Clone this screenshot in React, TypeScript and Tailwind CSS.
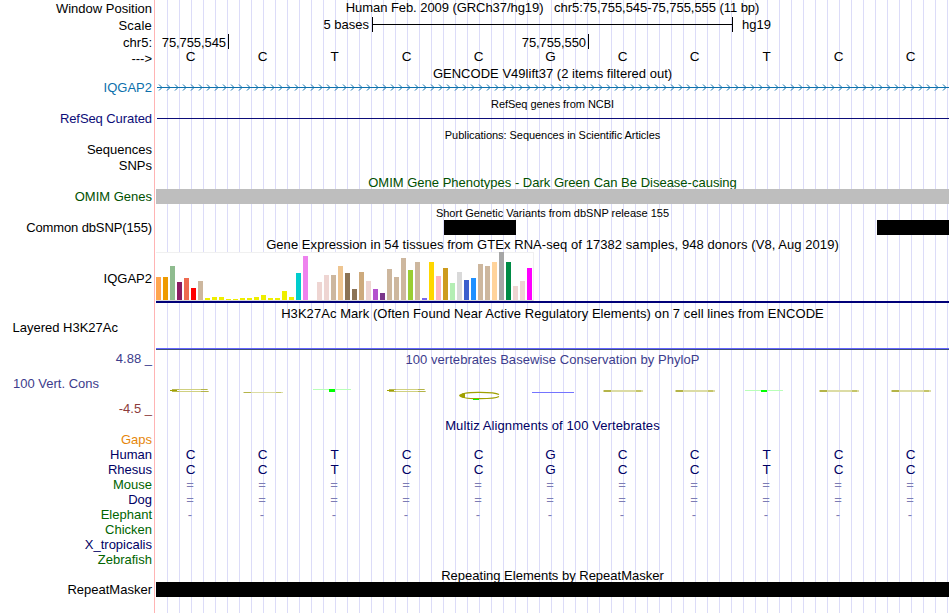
import type { ReactNode } from "react";
import clsx from "clsx";

interface TrackRowProps {
  height: string;
  label?: string;
  labelClass?: string;
  children?: ReactNode;
}

interface GtexBar {
  height: number;
  color: string;
}

const SEQUENCE = ["C", "C", "T", "C", "C", "G", "C", "C", "T", "C", "C"];

const SPECIES = [
  { name: "Gaps", color: "text-[#e6860a]", symbol: "" },
  { name: "Human", color: "text-[#000064]", symbol: "base" },
  { name: "Rhesus", color: "text-[#000064]", symbol: "base" },
  { name: "Mouse", color: "text-[#006400]", symbol: "=" },
  { name: "Dog", color: "text-[#000064]", symbol: "=" },
  { name: "Elephant", color: "text-[#006400]", symbol: "-" },
  { name: "Chicken", color: "text-[#006400]", symbol: "" },
  { name: "X_tropicalis", color: "text-[#000064]", symbol: "" },
  { name: "Zebrafish", color: "text-[#006400]", symbol: "" },
];

// median expression per tissue, in pixels
const GTEX: GtexBar[] = [
  { height: 23, color: "#ffa54f" },
  { height: 23, color: "#ee9a00" },
  { height: 34, color: "#8fbc8f" },
  { height: 18, color: "#8b1c62" },
  { height: 22, color: "#ee6a50" },
  { height: 12, color: "#ff0000" },
  { height: 19, color: "#cdb79e" },
  { height: 2, color: "#eeee00" },
  { height: 3, color: "#eeee00" },
  { height: 3, color: "#eeee00" },
  { height: 1, color: "#eeee00" },
  { height: 1, color: "#eeee00" },
  { height: 2, color: "#eeee00" },
  { height: 2, color: "#eeee00" },
  { height: 3, color: "#eeee00" },
  { height: 5, color: "#eeee00" },
  { height: 2, color: "#eeee00" },
  { height: 2, color: "#eeee00" },
  { height: 9, color: "#eeee00" },
  { height: 3, color: "#eeee00" },
  { height: 27, color: "#00cdcd" },
  { height: 44, color: "#ee82ee" },
  { height: 0, color: "#9ac0cd" },
  { height: 18, color: "#eed5d2" },
  { height: 25, color: "#eed5d2" },
  { height: 25, color: "#cdb79e" },
  { height: 34, color: "#eec591" },
  { height: 27, color: "#8b7355" },
  { height: 11, color: "#8b7355" },
  { height: 28, color: "#cdaa7d" },
  { height: 19, color: "#eed5d2" },
  { height: 11, color: "#b452cd" },
  { height: 7, color: "#7a378b" },
  { height: 31, color: "#cdb79e" },
  { height: 23, color: "#cdb79e" },
  { height: 42, color: "#cdb79e" },
  { height: 30, color: "#9acd32" },
  { height: 38, color: "#cdb79e" },
  { height: 2, color: "#7a67ee" },
  { height: 38, color: "#ffd700" },
  { height: 24, color: "#ffb6c1" },
  { height: 32, color: "#cd9b1d" },
  { height: 17, color: "#b4eeb4" },
  { height: 28, color: "#d9d9d9" },
  { height: 20, color: "#3a5fcd" },
  { height: 22, color: "#1e90ff" },
  { height: 36, color: "#cdb79e" },
  { height: 34, color: "#cdb79e" },
  { height: 38, color: "#ffd39b" },
  { height: 48, color: "#a6a6a6" },
  { height: 38, color: "#008b45" },
  { height: 14, color: "#eed5d2" },
  { height: 19, color: "#eed5d2" },
  { height: 32, color: "#ff00ff" },
];

function TrackRow({ height, label, labelClass, children }: TrackRowProps) {
  return (
    <div className={clsx("flex", height)}>
      <div className={clsx("w-[156px] shrink-0 pr-1 text-right", labelClass)}>
        {label}
      </div>
      <div className="w-[793px] shrink-0">{children}</div>
    </div>
  );
}

function Title({ text, className }: { text: string; className?: string }) {
  return <div className={clsx("text-center", className)}>{text}</div>;
}

function Bases({ symbol, className }: { symbol?: string; className?: string }) {
  return (
    <div
      className={clsx(
        "grid w-[792px] grid-cols-11 text-center",
        symbol ? "-ml-0.5" : "-ml-[1.5px] text-[13.5px]",
        className
      )}
    >
      {SEQUENCE.map((base, index) => (
        <span key={index}>{symbol ?? base}</span>
      ))}
    </div>
  );
}

function ScaleBar() {
  return (
    <div className="flex">
      <span className="w-[213px] text-right">5 bases</span>
      <div className="ml-[3px] flex h-[15px] w-[361px] items-center border-x border-black">
        <div className="h-px w-full bg-black" />
      </div>
      <span className="ml-[9px]">hg19</span>
    </div>
  );
}

function Ruler() {
  return (
    <div className="flex h-[15px] tracking-[-0.08px]">
      <div className="w-[73px] border-r border-black pt-px pr-0.5 text-right">
        75,755,545
      </div>
      <div className="w-[360px] border-r border-black pt-px pr-0.5 text-right">
        75,755,550
      </div>
    </div>
  );
}

function GeneArrows() {
  return (
    <svg className="ml-px block h-[15px] w-[792px]" viewBox="0 0 792 15">
      <defs>
        <pattern id="arrow" width="8" height="15" patternUnits="userSpaceOnUse">
          <path
            d="M2 4.5L5 7.5L2 10.5"
            fill="none"
            stroke="#0c70ac"
            strokeWidth="1"
          />
        </pattern>
      </defs>
      <rect width="792" height="15" fill="url(#arrow)" />
      <rect y="7" width="792" height="1" fill="#0c70ac" />
    </svg>
  );
}

function GtexChart() {
  return (
    <div className="h-[51px] border-b-2 border-[#000078]">
      <div className="flex h-[49px] w-[378px] items-end gap-0.5 border-t border-r border-b border-t-[#f0f0f0] border-r-[#f0f0f0] border-b-[#d8d8d8] bg-white">
        {GTEX.map((bar, index) => (
          <div
            key={index}
            className="w-[5px] shrink-0"
            style={{ height: bar.height, backgroundColor: bar.color }}
          />
        ))}
      </div>
    </div>
  );
}

function FlatC({ x, y = 23, height = 2 }: { x: number; y?: number; height?: number }) {
  return (
    <g>
      <rect x={x} y={y} width="40" height={height} fill="#dcdca4" />
      <rect x={x + 1} y={y} width="7" height={height} fill="#b4b448" />
      <rect x={x + 33} y={y} width="5" height={height} fill="#c4c468" />
    </g>
  );
}

// letter C squashed to three pixels, open on the right
function OpenC({ x }: { x: number }) {
  return (
    <g>
      <rect x={x + 2} y="22" width="36" height="1" fill="#d0d080" />
      <rect x={x + 2} y="24" width="37" height="1" fill="#d0d080" />
      <rect x={x + 2} y="22" width="7" height="1" fill="#b8b850" />
      <rect x={x + 2} y="24" width="7" height="1" fill="#b8b850" />
      <rect x={x + 31} y="22" width="6" height="1" fill="#b4b448" />
      <rect x={x + 31} y="24" width="7" height="1" fill="#b4b448" />
      <rect x={x} y="23" width="7" height="1" fill="#a0a000" />
    </g>
  );
}

function PhyloP() {
  return (
    <svg className="block h-[34px] w-[793px]" viewBox="0 0 793 34">
      <OpenC x={14} />
      <FlatC x={87} y={25} height={1} />
      <rect x="157" y="22" width="38" height="1" fill="#b8ffb8" />
      <rect x="173" y="22" width="6" height="3" fill="#00ff00" />
      <OpenC x={231} />
      <path
        d="M343 27.6C338 24.6 305 24.3 305 28.5C305 32.8 338 32.4 343 29.6"
        fill="none"
        stroke="#a0a000"
        strokeWidth="1.2"
      />
      <path d="M303 28.5Q304 26.5 309 26V31Q304 30.5 303 28.5" fill="#a0a000" />
      <rect x="317" y="32" width="6" height="1" fill="#00ff00" />
      <rect x="376" y="25" width="42" height="1" fill="#7474ff" />
      <FlatC x={447} />
      <FlatC x={519} />
      <rect x="589" y="23" width="38" height="1" fill="#b8ffb8" />
      <rect x="605" y="23" width="6" height="2" fill="#00ff00" />
      <FlatC x={663} />
      <FlatC x={735} />
    </svg>
  );
}

export default function App() {
  return (
    <div className="relative h-[613px] w-[950px] overflow-hidden bg-white font-['Liberation_Sans',sans-serif] text-[13px] leading-[15px] whitespace-pre text-black">
      {/* guide lines */}
      <div className="absolute inset-y-0 left-[154px] w-px bg-[#ffb4b4]" />
      <div className="absolute inset-y-0 left-[156px] w-[793px] bg-[linear-gradient(to_right,transparent_11px,#dcdcf8_11px)] bg-size-[12px_100%]" />

      <div className="relative flex flex-col">
        <TrackRow height="h-[17px]" label="Window Position" labelClass="pt-px">
          <Title
            text="Human Feb. 2009 (GRCh37/hg19)   chr5:75,755,545-75,755,555 (11 bp)"
            className="tracking-[-0.06px]"
          />
        </TrackRow>
        <TrackRow height="h-[17px]" label="Scale" labelClass="pt-px tracking-[0.2px]">
          <ScaleBar />
        </TrackRow>
        <TrackRow height="h-[15px]" label="chr5:" labelClass="pt-px">
          <Ruler />
        </TrackRow>
        <TrackRow height="h-[17px]" label="--->" labelClass="pt-0.5">
          <Bases />
        </TrackRow>

        {/* Genes */}
        <TrackRow height="h-[14px]">
          <Title text="GENCODE V49lift37 (2 items filtered out)" className="tracking-[0.02px]" />
        </TrackRow>
        <TrackRow height="h-[17px]" label="IQGAP2" labelClass="text-[#0c70ac]">
          <GeneArrows />
        </TrackRow>
        <TrackRow height="h-[14px]">
          <Title text="RefSeq genes from NCBI" className="text-[11px] tracking-[-0.05px]" />
        </TrackRow>
        <TrackRow
          height="h-[17px]"
          label="RefSeq Curated"
          labelClass="tracking-[-0.08px] text-[#0c0c78]"
        >
          <div className="mt-[7px] ml-px h-px bg-[#0c0c78]" />
        </TrackRow>

        {/* Literature and phenotypes */}
        <TrackRow height="h-[14px]">
          <Title
            text="Publications: Sequences in Scientific Articles"
            className="text-[11px] tracking-[-0.05px]"
          />
        </TrackRow>
        <TrackRow height="h-[16px]" label="Sequences" />
        <TrackRow height="h-[17px]" label="SNPs" />
        <TrackRow height="h-[14px]">
          <Title
            text="OMIM Gene Phenotypes - Dark Green Can Be Disease-causing"
            className="text-[#005000]"
          />
        </TrackRow>
        <TrackRow height="h-[17px]" label="OMIM Genes" labelClass="text-[#005000]">
          <div className="h-[15px] bg-[#bebebe]" />
        </TrackRow>

        {/* Variation */}
        <TrackRow height="h-[14px]">
          <Title text="Short Genetic Variants from dbSNP release 155" className="text-[11px]" />
        </TrackRow>
        <TrackRow
          height="h-[17px]"
          label="Common dbSNP(155)"
          labelClass="tracking-[-0.12px]"
        >
          <div className="flex h-[15px] justify-between pl-[288px]">
            <div className="w-[72px] bg-black" />
            <div className="w-[72px] bg-black" />
          </div>
        </TrackRow>

        {/* Expression */}
        <TrackRow height="h-[15px]">
          <Title
            text="Gene Expression in 54 tissues from GTEx RNA-seq of 17382 samples, 948 donors (V8, Aug 2019)"
            className="tracking-[0.06px]"
          />
        </TrackRow>
        <TrackRow height="h-[54px]" label="IQGAP2" labelClass="pt-[19px]">
          <GtexChart />
        </TrackRow>

        {/* Regulation */}
        <TrackRow height="h-[14px]">
          <Title
            text="H3K27Ac Mark (Often Found Near Active Regulatory Elements) on 7 cell lines from ENCODE"
            className="tracking-[0.06px]"
          />
        </TrackRow>
        <TrackRow height="h-[31px]" label="Layered H3K27Ac" labelClass="pr-[38px]">
          <div className="pt-7">
            <div className="h-0.5 border-b border-[#3c5078] bg-[#6464ff]" />
          </div>
        </TrackRow>

        {/* Conservation */}
        <TrackRow height="h-[16px]" label="4.88 _" labelClass="text-[#3c3c8c]">
          <Title
            text="100 vertebrates Basewise Conservation by PhyloP"
            className="pt-px tracking-[0.04px] text-[#3c3c8c]"
          />
        </TrackRow>
        <TrackRow
          height="h-[34px]"
          label="100 Vert. Cons"
          labelClass="pt-[9px] pr-[57px] text-[#3c3c8c]"
        >
          <PhyloP />
        </TrackRow>
        <TrackRow height="h-[17px]" label="-4.5 _" labelClass="text-[#8c3c3c]" />
        <TrackRow height="h-[14px]">
          <Title
            text="Multiz Alignments of 100 Vertebrates"
            className="tracking-[0.1px] text-[#000064]"
          />
        </TrackRow>
        {SPECIES.map((species) => (
          <TrackRow
            key={species.name}
            height="h-[15px]"
            label={species.name}
            labelClass={species.color}
          >
            {species.symbol === "base" && <Bases className="text-[#000064]" />}
            {species.symbol !== "base" && species.symbol !== "" && (
              <Bases symbol={species.symbol} className="text-[#7c7cb4]" />
            )}
          </TrackRow>
        ))}

        {/* Repeats */}
        <TrackRow height="h-[15px]">
          <Title text="Repeating Elements by RepeatMasker" className="pt-px" />
        </TrackRow>
        <TrackRow height="h-[31px]" label="RepeatMasker">
          <div className="h-[15px] bg-black" />
        </TrackRow>
      </div>
    </div>
  );
}
